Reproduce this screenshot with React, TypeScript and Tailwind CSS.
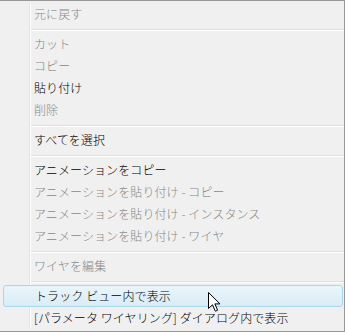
import React from "react";

type Entry =
  | { kind: "item"; label: string; disabled?: boolean; hot?: boolean }
  | { kind: "sep" };

const MENU: Entry[] = [
  { kind: "item", label: "元に戻す", disabled: true },
  { kind: "sep" },
  { kind: "item", label: "カット", disabled: true },
  { kind: "item", label: "コピー", disabled: true },
  { kind: "item", label: "貼り付け" },
  { kind: "item", label: "削除", disabled: true },
  { kind: "sep" },
  { kind: "item", label: "すべてを選択" },
  { kind: "sep" },
  { kind: "item", label: "アニメーションをコピー" },
  { kind: "item", label: "アニメーションを貼り付け - コピー", disabled: true },
  { kind: "item", label: "アニメーションを貼り付け - インスタンス", disabled: true },
  { kind: "item", label: "アニメーションを貼り付け - ワイヤ", disabled: true },
  { kind: "sep" },
  { kind: "item", label: "ワイヤを編集", disabled: true },
  { kind: "sep" },
  { kind: "item", label: "トラック ビュー内で表示", hot: true },
  { kind: "item", label: "[パラメータ ワイヤリング] ダイアログ内で表示" },
];

function Gutter() {
  return (
    <div className="flex shrink-0 self-stretch">
      <div className="w-[30px] border-r border-[#e2e3e3]" />
      <div className="w-px bg-white" />
    </div>
  );
}

function Cursor() {
  return (
    <svg width="13" height="20" viewBox="0 0 13 20" className="absolute left-[208px] top-[7px]">
      <path
        d="M0.5 0.5 L0.5 16.5 L4.5 12.8 L7.3 19.2 L9.6 18.2 L6.9 11.9 L12 11.9 Z"
        fill="#fff"
        stroke="#000"
        strokeWidth="1"
        strokeLinejoin="miter"
      />
    </svg>
  );
}

export default function App() {
  return (
    <div
      className="w-[345px] h-[332px] bg-[#f0f0f0] border-t border-b border-r border-[#979797] pt-[2px] pb-[2px] flex flex-col text-[12px] leading-none font-light tracking-[0.1px] select-none"
      style={{ fontFamily: '"Noto Sans CJK JP", "Meiryo UI", sans-serif' }}
    >
      {MENU.map((e, i) => {
        if (e.kind === "sep") {
          return (
            <div key={i} className="h-[8px] flex">
              <Gutter />
              <div className="flex-1 flex flex-col pt-[4px]">
                <div className="h-px bg-[#e0e0e0]" />
                <div className="h-px bg-white" />
              </div>
            </div>
          );
        }
        if (e.hot) {
          return (
            <div key={i} className="h-[22px] relative">
              <div className="ml-[3px] mr-[1px] h-[22px] rounded-[3px] border border-[#a8d8ec] bg-gradient-to-b from-[#eaf5fb] to-[#d9ecf6] flex items-center pl-[31px] text-black">
                {e.label}
              </div>
              <Cursor />
            </div>
          );
        }
        return (
          <div key={i} className="h-[22px] flex items-center">
            <Gutter />
            <span className={"pl-[3px] " + (e.disabled ? "text-[#888888]" : "text-black")}>{e.label}</span>
          </div>
        );
      })}
    </div>
  );
}
